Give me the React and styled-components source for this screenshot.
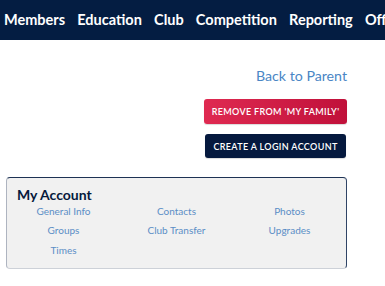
import React from "react";
import styled, { createGlobalStyle } from "styled-components";

const GlobalStyle = createGlobalStyle`
  html, body { margin: 0; padding: 0; background: #ffffff; }
  body { font-family: "Lato", "Open Sans", "Liberation Sans", sans-serif; }
`;

const Nav = styled.nav`
  height: 40px;
  background: #041d42;
  display: flex;
  align-items: center;
  gap: 12.2px;
  padding-left: 4px;
  padding-bottom: 2px;
  box-sizing: border-box;
  overflow: hidden;
  white-space: nowrap;
`;

const NavItem = styled.a`
  color: #ffffff;
  font-size: 14.5px;
  font-weight: 700;
  text-decoration: none;
  flex-shrink: 0;
`;

const Main = styled.main`
  display: flex;
  flex-direction: column;
  align-items: flex-end;
  padding: 26px 38px 0 6px;
`;

const BackLink = styled.a`
  color: #4a86c5;
  font-size: 14.2px;
  text-decoration: none;
  line-height: 20px;
  margin-bottom: 13px;
`;

const Button = styled.button`
  border: none;
  border-radius: 3px;
  color: #ffffff;
  font-family: inherit;
  font-size: 9px;
  font-weight: 600;
  letter-spacing: 0.35px;
  text-transform: uppercase;
  white-space: nowrap;
  padding: 0;
  display: flex;
  align-items: center;
  justify-content: center;
  width: ${(p) => p.$w}px;
  height: ${(p) => p.$h}px;
  background: ${(p) =>
    p.$variant === "danger"
      ? "linear-gradient(90deg, #df2a51, #c0103a)"
      : "#05193e"};
  box-shadow: 0 1px 1px rgba(0, 0, 0, 0.15);
  margin-bottom: ${(p) => p.$mb || 0}px;
  margin-right: ${(p) => p.$mr || 0}px;
`;

const Card = styled.section`
  align-self: stretch;
  margin-top: 19px;
  height: 92px;
  box-sizing: border-box;
  background: #f1f1f1;
  border: 1px solid;
  border-color: #1d3254 #2f4466 #cdd1d8 #aeb4c0;
  border-radius: 4px;
  padding-top: 8px;
`;

const CardTitle = styled.h2`
  margin: 0 0 0 10px;
  font-size: 14px;
  font-weight: 700;
  color: #061a3d;
  line-height: 18px;
`;

const LinkGrid = styled.div`
  display: grid;
  grid-template-columns: repeat(3, 1fr);
  grid-auto-rows: 19.5px;
  align-items: center;
  margin-top: -3px;
`;

const CardLink = styled.a`
  color: #5b8ec6;
  font-size: 10px;
  text-align: center;
  text-decoration: none;
`;

const navItems = ["Members", "Education", "Club", "Competition", "Reporting", "Officials"];
const links = ["General Info", "Contacts", "Photos", "Groups", "Club Transfer", "Upgrades", "Times"];

export default function App() {
  return (
    <>
      <GlobalStyle />
      <Nav>
        {navItems.map((n) => (
          <NavItem key={n}>{n}</NavItem>
        ))}
      </Nav>
      <Main>
        <BackLink>Back to Parent</BackLink>
        <Button $variant="danger" $w={143} $h={25} $mb={10}>
          Remove from 'My Family'
        </Button>
        <Button $w={141} $h={24} $mr={1}>
          Create a login account
        </Button>
        <Card>
          <CardTitle>My Account</CardTitle>
          <LinkGrid>
            {links.map((l) => (
              <CardLink key={l}>{l}</CardLink>
            ))}
          </LinkGrid>
        </Card>
      </Main>
    </>
  );
}
